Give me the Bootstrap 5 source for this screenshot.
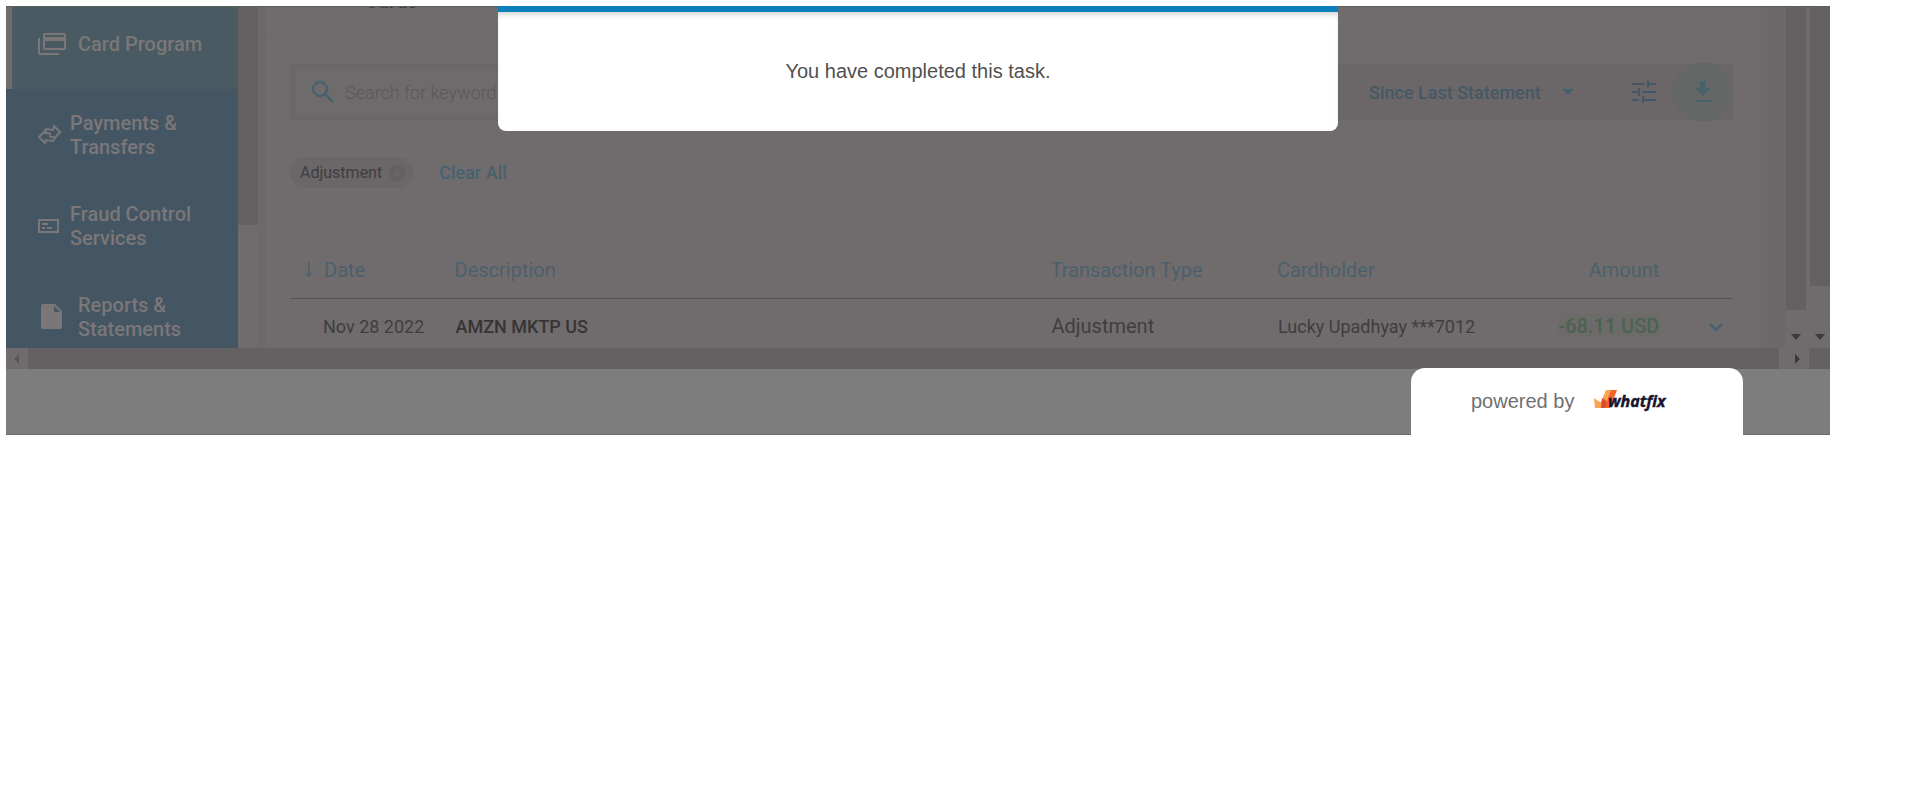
<!DOCTYPE html>
<html lang="en">
<head>
<meta charset="utf-8">
<meta name="viewport" content="width=device-width, initial-scale=1">
<title>Transactions</title>
<link href="https://cdn.jsdelivr.net/npm/bootstrap@5.3.0/dist/css/bootstrap.min.css" rel="stylesheet">
<style>
  :root { --surface: #706c6d; --shade: #6b6768; --bar: #656162; --ink: #403d3e; --teal: #48616e; --pale: #7b7778; }
  body { font-family: Roboto, "Liberation Sans", sans-serif; background: #fff; padding: 6px 90px 0 6px; }
  .stage { background: #7d7d7d; border-bottom: 1px solid #6a6a6a; }
  .app { background: var(--surface); height: 342px; border-top: 1px solid #5a5e5b; }
  .side { width: 232px; background: #445563; flex: none; }
  .side a { height: 91px; color: var(--pale); font-size: 20px; line-height: 24px; font-weight: 500; padding-left: 32px; flex: none; }
  .side a.current { background: #4a5a63; height: 82px; border-left: 6px solid #6d6d6c; padding-left: 26px; padding-bottom: 8px; }
  .side svg { flex: none; }
  .vbar { width: 20px; flex: none; background: var(--surface); }
  .thumb { background: var(--bar); }
  .side-thumb { height: 218px; }
  .gutter { background: #6d696a; flex: none; }
  .gutter-end { width: 25px; }
  .tabs-strip { height: 28px; border-bottom: 1px solid #6c6869; padding-left: 99px; }
  .tabs-strip span { font-size: 20px; line-height: 20px; font-weight: 700; margin-top: -16px; color: var(--ink); }
  .panel { padding: 29px 28px 0 24px; }
  .search { background: var(--shade); height: 56px; }
  .search-box { background: #6f6b6c; margin: 5px 0 5px 6px; padding-left: 15px; gap: 10px; width: 54%; }
  .search-box input { font-size: 18px; color: #5f5b5c; height: 46px; }
  .search-box input::placeholder { color: #5c5859; opacity: 1; font-weight: 300; }
  .period { appearance: none; background: none; border: 0; padding: 0; color: #455866; font-size: 18px; font-weight: 500; width: 184px; }
  .plain { background: none; border: 0; padding: 0; line-height: 1; }
  .dl { width: 60px; height: 60px; background: #656666; border-radius: 50%; }
  .chip-row { margin-top: 37px; gap: 26px; }
  .chip { background: var(--shade); height: 31px; border-radius: 16px; padding: 0 7px 0 10px; gap: 6px; font-size: 16px; color: var(--ink); }
  .clear-all { color: var(--teal); font-size: 18px; font-weight: 500; }
  .ledger { table-layout: fixed; width: 100%; margin-top: 54px; }
  .ledger th { font-size: 21px; font-weight: 300; color: #445d6d; height: 56px; border-bottom: 1px solid #565253; padding: 0; }
  .ledger th { font-size: 20px; font-weight: 400; color: #4b606c; }
  .ledger td { font-size: 18px; color: var(--ink); height: 56px; padding: 0 0 0 1px; }
  .ledger .big { font-size: 20px; }
  .ledger .money { font-size: 20px; color: #4b6350; font-weight: 500; padding: 0; }
  .money span { background: #6d6b6a; }
  .merchant { font-weight: 500; color: #373435; }
  .w-date { width: 11.4%; } .w-desc { width: 41.3%; } .w-type { width: 15.7%; } .w-holder { width: 17.3%; } .w-amt { width: 9.2%; }
  .date-head { gap: 11px; padding-left: 14px; }
  .hbar { height: 21px; background: var(--surface); }
  .hbar-corner { width: 21px; }
  .foot { height: 65px; }
  .dialog-card { top: 0; left: 27%; width: 46%; height: 125px; background: #fff; border-top: 6px solid #0b7fb9; border-radius: 0 0 8px 8px; color: #505050; font: 20px "Liberation Sans", sans-serif; box-shadow: inset 0 5px 6px -3px #ccc; }
  .powered { right: 87px; bottom: -1px; width: 332px; height: 67px; background: #fff; border-radius: 14px 14px 0 0; color: #707070; font: 20px "Liberation Sans", sans-serif; padding-left: 60px; gap: 19px; }
  .powered svg { margin-bottom: 4px; }
  .powered text { font: italic 700 16px "Open Sans", sans-serif; fill: #17142f; stroke: #17142f; stroke-width: 0.4; }
</style>
</head>
<body>
<div class="stage position-relative">
  <main class="app d-flex overflow-hidden">
    <nav class="side d-flex flex-column overflow-hidden">
      <a href="#" class="current d-flex align-items-center text-decoration-none gap-2">
        <svg width="28" height="24" viewBox="0 0 28 24" fill="none" stroke="currentColor" stroke-width="2"><rect x="6" y="2" width="21" height="15" rx="1"/><path d="M6 6h21M6 8h21M1 6v15q0 1 1 1h19"/></svg>
        <span class="ps-1">Card Program</span>
      </a>
      <a href="#" class="d-flex align-items-center text-decoration-none gap-2">
        <svg width="24" height="24" viewBox="0 0 24 24" fill="none" stroke="currentColor" stroke-width="2"><path d="M8 7l-7 7 6 6 1-3 7 1 2-3-6-2M16 16l6-7-6-6-1 4-7-1-2 3 7 2"/></svg>
        <span>Payments &amp;<br>Transfers</span>
      </a>
      <a href="#" class="d-flex align-items-center text-decoration-none gap-2">
        <svg width="24" height="24" viewBox="0 0 24 24" fill="none" stroke="currentColor" stroke-width="2"><path d="M1 6h19v12H1zM4 10h6M4 14h3M9 14h5"/></svg>
        <span>Fraud Control<br>Services</span>
      </a>
      <a href="#" class="d-flex align-items-center text-decoration-none gap-2">
        <svg width="28" height="26" viewBox="0 0 28 26" fill="currentColor"><path fill-rule="evenodd" d="M5 0h12l7 7v16q0 2-2 2H5q-2 0-2-2V2q0-2 2-2zm11 2v6h6z"/></svg>
        <span class="ps-1">Reports &amp;<br>Statements</span>
      </a>
    </nav>
    <div class="vbar"><div class="thumb side-thumb"></div></div>
    <div class="gutter ps-2"></div>
    <section class="flex-grow-1 overflow-hidden">
      <div class="tabs-strip d-flex overflow-hidden"><span>Cards</span></div>
      <div class="panel">
        <div class="search d-flex align-items-center">
          <div class="search-box d-flex align-items-center">
            <svg width="24" height="24" viewBox="0 0 24 24" fill="none" stroke="#48616e" stroke-width="2.5"><circle cx="9" cy="9" r="7"/><path d="M14 14l8 8"/></svg>
            <input type="text" class="border-0 bg-transparent p-0 flex-grow-1" aria-label="Search for keywords" placeholder="Search for keywords">
          </div>
          <div class="d-flex align-items-center ms-auto">
            <select class="period" aria-label="Period"><option>Since Last Statement</option></select>
            <svg class="ms-2" width="14" height="8" viewBox="0 0 14 8" fill="#455f6e"><path d="M1 1h12L7 7z"/></svg>
            <button class="plain ms-5 me-3 ps-2" aria-label="Filters"><svg width="26" height="24" viewBox="0 0 26 24" fill="none" stroke="#435764" stroke-width="2"><path d="M1 4h13M17 4h8M17 1v7M1 12h6M11 12h14M8 8v8M1 20h7M12 20h13M12 16v7"/></svg></button>
            <button class="plain dl" aria-label="Download"><svg width="20" height="24" viewBox="0 0 20 24" fill="#48616a"><path d="M7 1h6v7h5l-8 8-8-8h5zM2 20h17v2H2z"/></svg></button>
          </div>
        </div>
        <div class="chip-row d-flex align-items-center">
          <span class="chip d-flex align-items-center">Adjustment
            <button class="plain d-flex" aria-label="Remove"><svg width="18" height="18" viewBox="0 0 18 18"><circle cx="9" cy="9" r="8" fill="#636161"/><path d="M6 6l6 6M12 6l-6 6" stroke="#6b6768" stroke-width="2"/></svg></button>
          </span>
          <a href="#" class="clear-all text-decoration-none">Clear All</a>
        </div>
        <table class="ledger">
          <thead><tr>
            <th class="w-date"><div class="date-head d-flex align-items-center"><svg width="9" height="16" viewBox="0 0 9 16" fill="none" stroke="currentColor" stroke-width="1.5"><path d="M5 0v13M2 11l3 3 2-3"/></svg>Date</div></th>
            <th class="w-desc">Description</th><th class="w-type">Transaction Type</th><th class="w-holder">Cardholder</th><th class="w-amt text-end">Amount</th><th></th>
          </tr></thead>
          <tbody><tr>
            <td><div class="ps-4 ms-2">Nov 28 2022</div></td><td><span class="merchant">AMZN MKTP US</span></td><td class="big">Adjustment</td><td>Lucky Upadhyay ***7012</td><td class="money text-end"><span>-68.11 USD</span></td>
            <td class="text-end"><button class="plain me-2" aria-label="Expand"><svg width="18" height="12" viewBox="0 0 18 12" fill="none" stroke="#48616e" stroke-width="2.5"><path d="M3 2l6 6 6-6"/></svg></button></td>
          </tr></tbody>
        </table>
      </div>
    </section>
    <div class="gutter gutter-end"></div>
    <div class="vbar d-flex flex-column align-items-center me-1">
      <div class="thumb w-100 h-100"></div>
      <svg class="mt-4 mb-2 flex-shrink-0" width="10" height="6" viewBox="0 0 10 6"><path d="M0 0h10L5 6z" fill="#3c393a"/></svg>
    </div>
    <div class="vbar d-flex flex-column align-items-center">
      <div class="thumb w-100 h-100"></div>
      <svg class="mt-5 mb-2 flex-shrink-0" width="10" height="6" viewBox="0 0 10 6"><path d="M0 0h10L5 6z" fill="#3c393a"/></svg>
    </div>
  </main>
  <div class="hbar d-flex align-items-center">
    <svg class="mx-2" width="6" height="10" viewBox="0 0 6 10"><path d="M5 0v10L0 5z" fill="#5a5657"/></svg>
    <div class="thumb flex-grow-1 h-100"></div>
    <svg class="ms-3 me-1" width="6" height="10" viewBox="0 0 6 10"><path d="M0 0v10l5-5z" fill="#3c393a"/></svg>
    <div class="thumb hbar-corner h-100 ms-1"></div>
  </div>
  <div class="foot"></div>
  <div class="dialog-card position-absolute d-flex align-items-center justify-content-center">You have completed this task.</div>
  <div class="powered position-absolute d-flex align-items-center"><span>powered by</span>
    <svg width="96" height="26" viewBox="0 0 96 26" role="img" aria-label="whatfix"><path d="M1 11l4 3 3 1 5-12h6l-7 18H2z" fill="#fba552"/><path d="M10 11l4 3 4-11h6l-7 18H9z" fill="#f2642b"/><path d="M9 11l5 5-2 5H8z" fill="#dd4a2c"/><text x="15" y="20">whatfix</text></svg>
  </div>
</div>
<script src="https://cdn.jsdelivr.net/npm/bootstrap@5.3.0/dist/js/bootstrap.bundle.min.js"></script>
</body>
</html>
